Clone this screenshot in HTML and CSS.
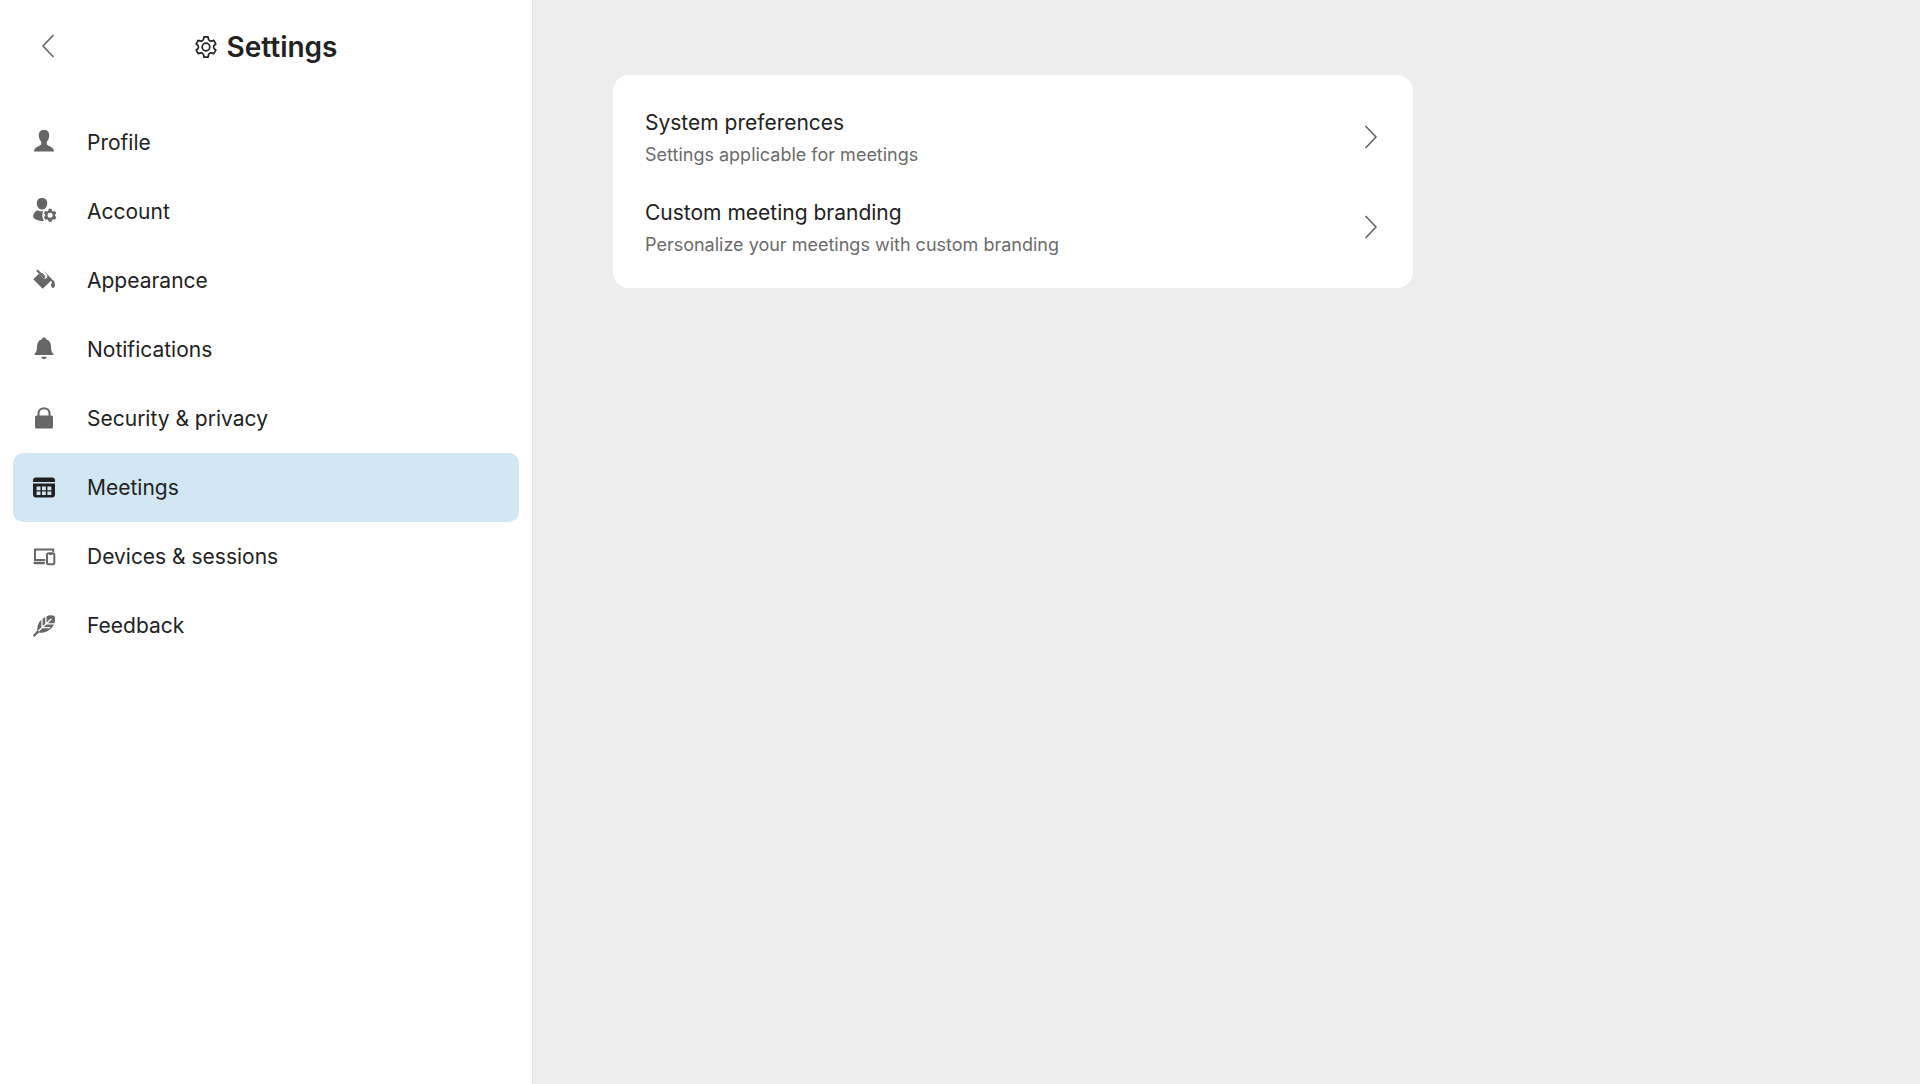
FILE: index.html
```
<!DOCTYPE html>
<html lang="en">
<head>
    <meta charset="UTF-8">
    <meta name="viewport" content="width=device-width, initial-scale=1.0">
    <title>Settings</title>
    <link rel="stylesheet" href="styles.css">
</head>
<body>
    <div class="layout">
        <aside class="sidebar">
            <header class="sidebar-header">
                <button type="button" class="back-button" aria-label="Back">
                    <svg class="chevron" viewBox="0 0 12 24"><path d="M11 1.5 1 12l10 10.500"/></svg>
                </button>
                <h1 class="title">
                    <svg class="title-icon" viewBox="0 0 24 24">
                        <path d="M10 1.800h4l.6 2.800c.8 1.300 1.700 1.700 2.800 1.500l2.400-.7 2 3.460-1.900 1.800c-.6 1-.6 1.700 0 2.680l1.900 1.800-2 3.460-2.400-.7c-1.100-.2-2 .2-2.800 1.500l-.6 2.800h-4l-.6-2.800c-.8-1.300-1.700-1.700-2.800-1.500l-2.400.7-2-3.460 1.900-1.800c.6-1 .6-1.700 0-2.680l-1.900-1.800 2-3.460 2.400.7c1.100.2 2-.2 2.800-1.500z"/>
                        <circle cx="12" cy="12" r="3.800"/>
                    </svg>
                    Settings
                </h1>
            </header>

            <nav class="menu">
                <a href="#profile" class="menu-item">
                    <svg class="menu-icon" viewBox="0 0 28 28">
                        <path d="M14 1c3.600 0 5.200 2 5.200 5.200 0 2.800-.9 5-2.400 6.300v2.700c.3 1.800 7.200 2.200 7.200 7.300H4c0-5.100 6.900-5.500 7.200-7.300v-2.700C9.700 11.200 8.800 9 8.800 6.200 8.800 3 10.400 1 14 1z"/>
                    </svg>
                    Profile
                </a>
                <a href="#account" class="menu-item">
                    <svg class="menu-icon" viewBox="0 0 28 28">
                        <path d="M12 0c3.400 0 5.200 1.900 5.200 5.200 0 3.500-2.100 6.400-5.200 6.400S6.800 8.700 6.800 5.200C6.800 1.900 8.600 0 12 0z"/>
                        <path d="M7.500 12.200c2.500 1.500 4.500 1.300 6 .6-1.700 2.600-1.500 7.400.5 10.200-5 .2-9-.8-10.600-3.400-.8-2.800 1-6 4.100-7.400z"/>
                        <path fill-rule="evenodd" d="M18.700 10.800h2.800l.5 1.900 1.200.7 1.800-.5 1.400 2.400-1.300 1.300v1.400l1.300 1.300-1.400 2.400-1.800-.5-1.200.7-.5 1.900h-2.800l-.5-1.900-1.200-.7-1.800.5-1.400-2.400 1.300-1.300v-1.400l-1.300-1.300 1.400-2.400 1.800.5 1.200-.7zM20.100 14.800a2.500 2.500 0 1 0 0 5 2.500 2.500 0 0 0 0-5z"/>
                    </svg>
                    Account
                </a>
                <a href="#appearance" class="menu-item">
                    <svg class="menu-icon" viewBox="0 0 28 28">
                        <path d="M9.300 6.500 3.300 12.300l9.400 9.400 9.600-9.100-7.800-8.200-1.700 1.500"/>
                        <path class="cutout" d="m8.500 4.500 5.500 6a1.500 1.500 0 0 0 2.100-2.100l-3.700-4.300"/>
                        <path class="outline" d="m7.500 3.800 6.800 6.800"/>
                        <path d="M20.500 12.500c2.900.2 4.500 1.500 4.500 5.700 0 3.400-4 3.400-4 0 0-1.800 1.200-2.500.8-3.200z"/>
                    </svg>
                    Appearance
                </a>
                <a href="#notifications" class="menu-item">
                    <svg class="menu-icon" viewBox="0 0 28 28">
                        <path d="M14 1.500c1.200 0 2 .7 2.200 1.700 3.300 1 4.700 3.700 4.800 7 .1 4.500.7 6 2.500 7.700v1.200h-19v-1.200c1.800-1.700 2.400-3.200 2.500-7.700.1-3.300 1.500-6 4.800-7 .2-1 1-1.700 2.200-1.700zM11.300 20.700h5.400c-.3 1.600-1.400 2.500-2.700 2.500s-2.400-.9-2.700-2.500z"/>
                    </svg>
                    Notifications
                </a>
                <a href="#security" class="menu-item">
                    <svg class="menu-icon" viewBox="0 0 28 28">
                        <rect x="5" y="10.500" width="18" height="13" rx="1.500"/>
                        <path class="outline" d="M8.500 11.500v-3c0-7 11-7 11 0v3"/>
                    </svg>
                    Security &amp; privacy
                </a>
                <a href="#meetings" class="menu-item active" aria-current="page">
                    <svg class="menu-icon" viewBox="0 0 28 28">
                        <path d="M3 8V6.500c0-2 1-3 3-3h16c2 0 3 1 3 3V8z"/>
                        <path fill-rule="evenodd" d="M3 9.500h22v11c0 2-1 3-3 3H6c-2 0-3-1-3-3zM6.600 12.500v3.800h3.900v-3.800zm5.400 0v3.800h3.900v-3.800zm5.400 0v3.800h3.900v-3.800zM6.600 17.500v3.400h3.900v-3.400zm5.400 0v3.400h3.900v-3.400zm5.400 0v3.400h3.900v-3.400z"/>
                    </svg>
                    Meetings
                </a>
                <a href="#devices" class="menu-item">
                    <svg class="menu-icon" viewBox="0 0 28 28">
                        <path class="outline" d="M14.500 17H5V6.500h18.200v1.800"/>
                        <rect x="3.500" y="18.800" width="11.500" height="2.500" rx="1"/>
                        <rect class="outline" x="17" y="10.200" width="7.300" height="11" rx="1.500"/>
                        <path d="M19 10h3.300v2H19z"/>
                    </svg>
                    Devices &amp; sessions
                </a>
                <a href="#feedback" class="menu-item">
                    <svg class="menu-icon" viewBox="0 0 28 28">
                        <path d="M16 4.500c3-1.500 6.500-1.600 8.600-.3 1.200 4.500-.2 9.500-4.100 12.800-3.400 3-7.200 4.200-11.500 3.500L4.200 25l-1.400-1.400 4.500-5C7 14.500 8.200 11 11 8z"/>
                        <path class="cutout thin" d="M8.500 19 21.500 6.700M15.900 3.500v8.400M12 7v8.700M24.500 11.900h-8.600M20 15.700h-8"/>
                    </svg>
                    Feedback
                </a>
            </nav>
        </aside>

        <main class="content">
            <section class="card">
                <a href="#system-preferences" class="card-row">
                    <div class="card-text">
                        <h2>System preferences</h2>
                        <p>Settings applicable for meetings</p>
                    </div>
                    <svg class="chevron" viewBox="0 0 12 24"><path d="m1 1.500 10 10.500L1 22.500"/></svg>
                </a>
                <a href="#custom-branding" class="card-row">
                    <div class="card-text">
                        <h2>Custom meeting branding</h2>
                        <p>Personalize your meetings with custom branding</p>
                    </div>
                    <svg class="chevron" viewBox="0 0 12 24"><path d="m1 1.500 10 10.500L1 22.500"/></svg>
                </a>
            </section>
        </main>
    </div>
</body>
</html>
```
FILE: styles.css
```
* {
    margin: 0;
    padding: 0;
    box-sizing: border-box;
}

body {
    font-family: Inter, 'Liberation Sans', sans-serif;
    color: #222;
    background: #ededed;
}

a {
    color: inherit;
    text-decoration: none;
}

.layout {
    display: flex;
    min-height: 100vh;
}

/* Sidebar */
.sidebar {
    flex: 0 0 533px;
    background: #fff;
    border-right: 1px solid #e2e2e2;
}

.sidebar-header {
    display: grid;
    grid-template-columns: 64px 1fr 64px;
    align-items: center;
    height: 94px;
}

.back-button {
    justify-self: end;
    width: 32px;
    height: 40px;
    background: none;
    border: none;
    cursor: pointer;
}

.chevron {
    flex: none;
    width: 12px;
    height: 24px;
    fill: none;
    stroke: #666;
    stroke-width: 1.7;
    stroke-linecap: round;
    stroke-linejoin: round;
}

.title {
    display: flex;
    align-items: center;
    justify-content: center;
    gap: 8px;
    font-size: 28px;
    font-weight: 600;
    line-height: 32px;
}

.title-icon {
    width: 24px;
    height: 24px;
    fill: none;
    stroke: currentColor;
    stroke-width: 1.7;
    stroke-linejoin: round;
}

.menu {
    padding: 14px 13px;
}

.menu-item {
    display: flex;
    align-items: center;
    gap: 29px;
    height: 69px;
    padding: 0 17px;
    border-radius: 10px;
    font-size: 21px;
}

.menu-item.active {
    background: #d2e7f4;
}

.menu-icon {
    width: 28px;
    height: 28px;
    fill: #666;
}

.active .menu-icon {
    fill: #222;
}

.menu-icon .outline {
    fill: none;
    stroke: #666;
    stroke-width: 2;
    stroke-linecap: round;
}

.menu-icon .cutout {
    fill: none;
    stroke: #fff;
    stroke-width: 2;
}

.menu-icon .thin {
    stroke-width: 1.3;
}

/* Content */
.content {
    flex: 1;
    padding: 75px 80px;
}

.card {
    max-width: 800px;
    padding: 17px 0 16px;
    background: #fff;
    border-radius: 16px;
}

.card-row {
    display: flex;
    align-items: center;
    justify-content: space-between;
    padding: 13px 36px 13px 32px;
}

.card-text h2 {
    font-size: 21px;
    font-weight: 400;
    line-height: 36px;
}

.card-text p {
    color: #6b6b6b;
    font-size: 18px;
    line-height: 28px;
}
```
